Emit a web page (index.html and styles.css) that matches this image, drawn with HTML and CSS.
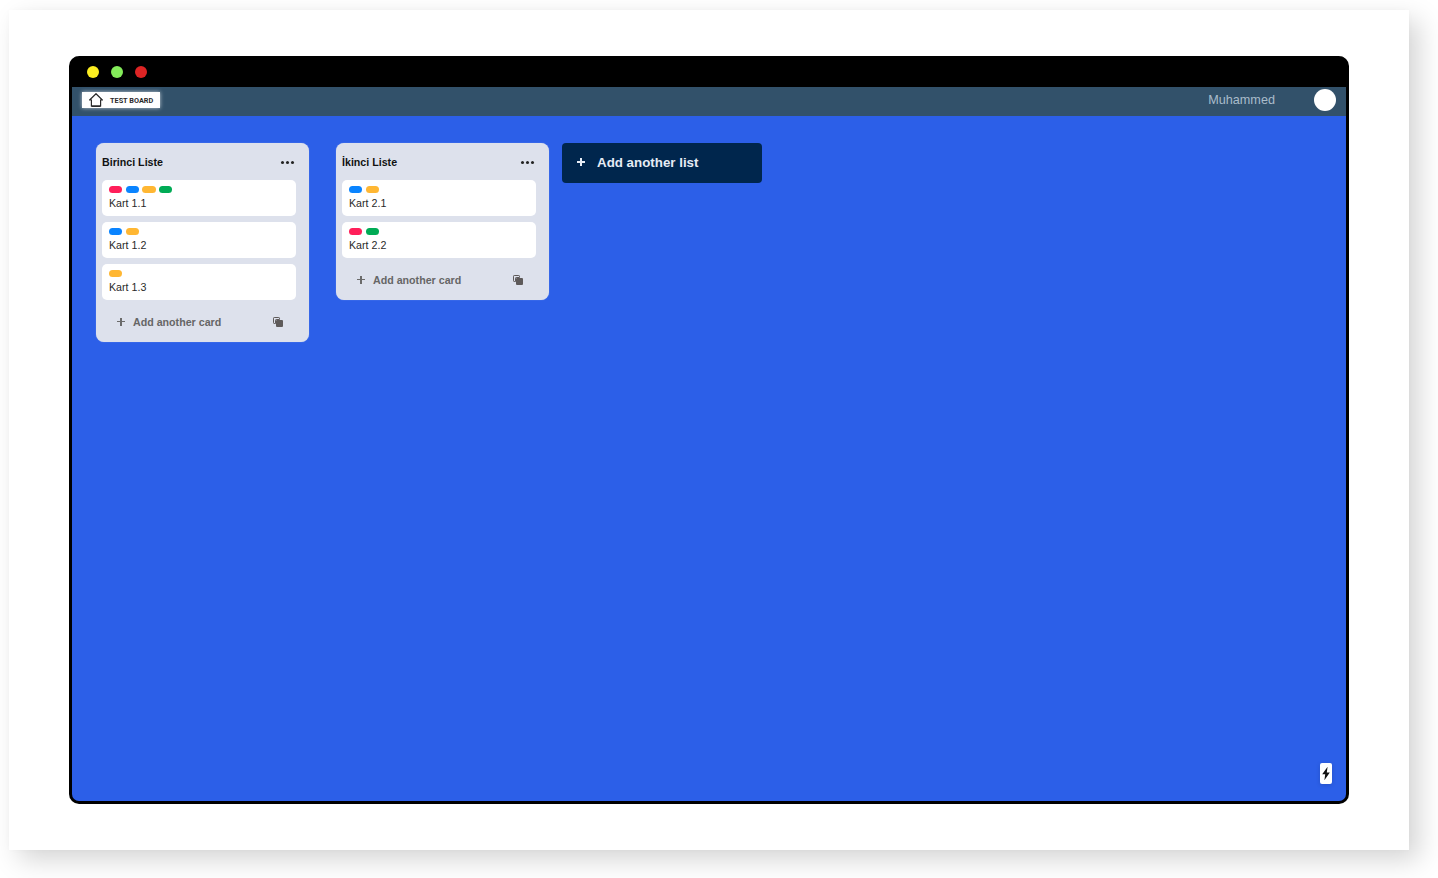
FILE: index.html
```html
<!DOCTYPE html>
<html lang="en">
<head>
<meta charset="utf-8">
<title>Test Board</title>
<link rel="stylesheet" href="styles.css">
</head>
<body>
<div class="sheet">
  <div class="window">
    <div class="titlebar">
      <span class="dot dot-yellow"></span>
      <span class="dot dot-green"></span>
      <span class="dot dot-red"></span>
    </div>
    <header class="nav">
      <div class="logo">
        <svg class="logo-icon" viewBox="0 0 14 14" width="14" height="14" fill="none" stroke="#2a2a2a" stroke-width="1.2">
          <path d="M.6 7 L7 .7 L13.4 7 H11.6 V13 H2.4 V7 Z"/>
          <path d="M2.4 13.2 H11.6" stroke-width="1.5"/>
        </svg>
        <span class="logo-text">TEST BOARD</span>
      </div>
      <div class="user">
        <span class="user-name">Muhammed</span>
        <span class="avatar"></span>
      </div>
    </header>
    <main class="board">
      <section class="list">
        <div class="list-head">
          <h2 class="list-title">Birinci Liste</h2>
          <span class="more"><i></i><i></i><i></i></span>
        </div>
        <div class="cards">
          <article class="card">
            <div class="labels"><span class="label red"></span><span class="label blue"></span><span class="label yellow"></span><span class="label green"></span></div>
            <div class="card-text">Kart 1.1</div>
          </article>
          <article class="card">
            <div class="labels"><span class="label blue"></span><span class="label yellow"></span></div>
            <div class="card-text">Kart 1.2</div>
          </article>
          <article class="card">
            <div class="labels"><span class="label yellow"></span></div>
            <div class="card-text">Kart 1.3</div>
          </article>
        </div>
        <div class="list-foot">
          <span class="plus plus-dark"></span>
          <span class="add-card">Add another card</span>
          <svg class="copy" viewBox="0 0 10 10" width="10" height="10">
            <path d="M0.5 1.2 A.7 .7 0 0 1 1.2 .5 H5.8 A.7 .7 0 0 1 6.5 1.2 V2.5 H3.2 A.7 .7 0 0 0 2.5 3.2 V6.5 H1.2 A.7 .7 0 0 1 .5 5.8 Z" fill="none" stroke="#5e5a5a" stroke-width="1"/>
            <rect x="3" y="3" width="7" height="7" rx="1" fill="#5e5a5a"/>
          </svg>
        </div>
      </section>
      <section class="list">
        <div class="list-head">
          <h2 class="list-title">İkinci Liste</h2>
          <span class="more"><i></i><i></i><i></i></span>
        </div>
        <div class="cards">
          <article class="card">
            <div class="labels"><span class="label blue"></span><span class="label yellow"></span></div>
            <div class="card-text">Kart 2.1</div>
          </article>
          <article class="card">
            <div class="labels"><span class="label red"></span><span class="label green"></span></div>
            <div class="card-text">Kart 2.2</div>
          </article>
        </div>
        <div class="list-foot">
          <span class="plus plus-dark"></span>
          <span class="add-card">Add another card</span>
          <svg class="copy" viewBox="0 0 10 10" width="10" height="10">
            <path d="M0.5 1.2 A.7 .7 0 0 1 1.2 .5 H5.8 A.7 .7 0 0 1 6.5 1.2 V2.5 H3.2 A.7 .7 0 0 0 2.5 3.2 V6.5 H1.2 A.7 .7 0 0 1 .5 5.8 Z" fill="none" stroke="#5e5a5a" stroke-width="1"/>
            <rect x="3" y="3" width="7" height="7" rx="1" fill="#5e5a5a"/>
          </svg>
        </div>
      </section>
      <button class="add-list" type="button">
        <span class="plus plus-light"></span>
        <span>Add another list</span>
      </button>
      <div class="bolt">
        <svg viewBox="0 0 12 21" width="12" height="21"><path d="M7.6 3.8 L2.2 11.2 H5.2 L4.4 17.2 L9.8 9.6 H6.8 Z" fill="#111"/></svg>
      </div>
    </main>
  </div>
</div>
</body>
</html>
```
FILE: styles.css
```css
* { box-sizing: border-box; }
html, body { margin: 0; padding: 0; background: #fff; }
body {
  width: 1438px;
  height: 878px;
  overflow: hidden;
  padding: 10px 0 0 9px;
  font-family: "Liberation Sans", Arial, sans-serif;
}
.sheet {
  width: 1400px;
  height: 840px;
  padding: 46px 60px;
  background: #fff;
  box-shadow: 10px 10px 25px rgba(0, 0, 0, 0.17), 0 0 6px rgba(0, 0, 0, 0.02);
}
.window {
  width: 1280px;
  height: 748px;
  display: flex;
  flex-direction: column;
  background: #000;
  border: solid #000;
  border-width: 0 3px 3px;
  border-radius: 10px;
  overflow: hidden;
}
.titlebar {
  flex: 0 0 31px;
  display: flex;
  align-items: center;
  gap: 12px;
  padding-left: 15px;
}
.dot { width: 12px; height: 12px; border-radius: 50%; }
.dot-yellow { background: #fcee21; }
.dot-green { background: #84ec5a; }
.dot-red { background: #dd2424; }
.nav {
  flex: 0 0 29px;
  display: flex;
  align-items: center;
  justify-content: space-between;
  padding: 0 10px 3px 10px;
  background: #32516a;
}
.logo {
  width: 78px;
  height: 16px;
  display: flex;
  align-items: center;
  background: #fff;
  padding-left: 7px;
  box-shadow: 0 0 4px rgba(255, 255, 255, 0.7);
}
.logo-icon { flex: none; }
.logo-text {
  margin-left: 7px;
  font-size: 7.3px;
  font-weight: 700;
  color: #2a2a2a;
  white-space: nowrap;
  font-family: Roboto, "Liberation Sans", sans-serif;
}
.user { display: flex; align-items: center; }
.user-name { font-size: 12.67px; line-height: 14px; color: #a9bccb; margin-right: 39px; }
.avatar { width: 22px; height: 22px; border-radius: 50%; background: #fff; }
.board {
  position: relative;
  flex: 1;
  display: flex;
  align-items: flex-start;
  padding: 27px 24px;
  background: #2c5fe8;
}
.list {
  flex: none;
  width: 213px;
  margin-right: 27px;
  padding: 0 13px 0 6px;
  background: #dde1ec;
  border-radius: 8px;
  box-shadow: 0 0 1px rgba(255, 255, 255, 0.5);
}
.list + .list { margin-right: 13px; }
.list-head {
  height: 37px;
  display: flex;
  align-items: center;
  justify-content: space-between;
}
.list-title { margin: 0; font-size: 10.67px; font-weight: 700; color: #111; }
.more { display: flex; gap: 2px; padding-right: 2px; margin-top: 1px; }
.more i { width: 3px; height: 3px; border-radius: 50%; background: #222; }
.cards { display: flex; flex-direction: column; gap: 6px; }
.card {
  height: 36px;
  padding: 6px 7px 0;
  background: #fff;
  border-radius: 5px;
}
.labels { display: flex; gap: 3.33px; height: 6px; }
.label { width: 13.33px; height: 6.5px; border-radius: 4px; }
.red { background: #ff1f5a; }
.blue { background: #0a84ff; }
.yellow { background: #ffb733; }
.green { background: #00ab55; }
.card-text { margin-top: 3px; font-size: 10.67px; line-height: 16px; color: #2a2a2a; }
.list-foot {
  height: 42px;
  display: flex;
  align-items: center;
  padding: 1px 0 0 15px;
}
.plus { position: relative; display: block; flex: none; }
.plus::before, .plus::after { content: ""; position: absolute; background: currentColor; }
.plus-dark { width: 8px; height: 8px; color: #6b6b6b; }
.plus-light { width: 8px; height: 8px; color: #e6ecf5; }
.plus::before { left: 0; right: 0; top: 3.35px; height: 1.3px; }
.plus::after { top: 0; bottom: 0; left: 3.35px; width: 1.3px; }
.add-card { margin-left: 8px; font-size: 10.67px; font-weight: 700; color: #666; white-space: nowrap; }
.copy { margin-left: 51.5px; flex: none; }
.add-list {
  flex: none;
  width: 200px;
  height: 40px;
  display: flex;
  align-items: center;
  gap: 12px;
  padding: 0 0 2px 15px;
  background: #00264d;
  color: #e6ecf5;
  border: 0;
  border-radius: 4px;
  font: 700 13.33px "Liberation Sans", Arial, sans-serif;
}
.bolt {
  position: absolute;
  right: 14px;
  bottom: 17px;
  width: 12px;
  height: 21px;
  background: #fff;
  border-radius: 2px;
  box-shadow: 0 1px 4px rgba(0, 0, 0, 0.15);
}
.bolt svg { display: block; }
```
